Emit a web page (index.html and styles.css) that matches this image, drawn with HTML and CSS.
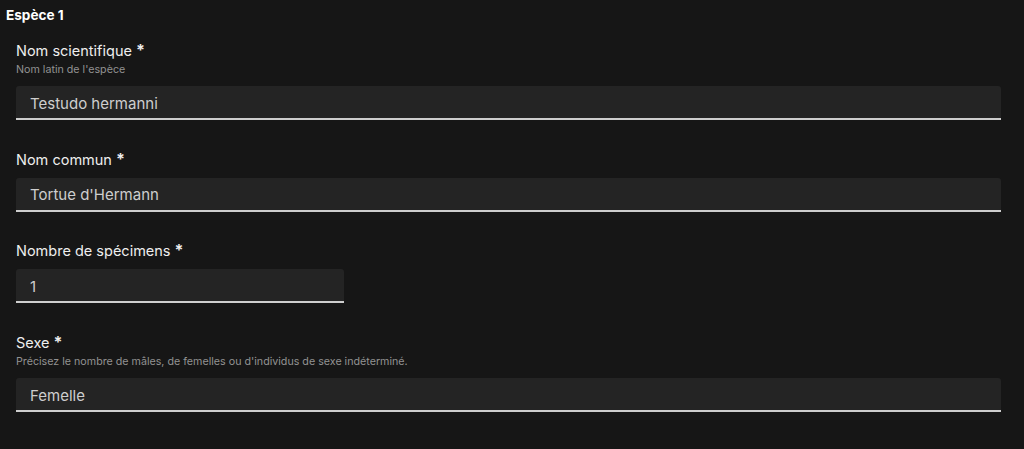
FILE: index.html
```html
<!DOCTYPE html>
<html lang="fr">
<head>
<meta charset="utf-8">
<title>Espèce 1</title>
<link rel="stylesheet" href="styles.css">
</head>
<body>
<section class="species">
  <h3 class="species-title">Espèce 1</h3>
  <div class="fields">
    <div class="group">
      <label class="label" for="sci">Nom scientifique <span class="req">*</span></label>
      <span class="hint">Nom latin de l'espèce</span>
      <input class="input" id="sci" type="text" value="Testudo hermanni">
    </div>
    <div class="group">
      <label class="label" for="common">Nom commun <span class="req">*</span></label>
      <input class="input" id="common" type="text" value="Tortue d'Hermann">
    </div>
    <div class="group">
      <label class="label" for="count">Nombre de spécimens <span class="req">*</span></label>
      <input class="input input-small" id="count" type="text" value="1">
    </div>
    <div class="group">
      <label class="label" for="sex">Sexe <span class="req">*</span></label>
      <span class="hint">Précisez le nombre de mâles, de femelles ou d'individus de sexe indéterminé.</span>
      <input class="input" id="sex" type="text" value="Femelle">
    </div>
  </div>
</section>
</body>
</html>
```
FILE: styles.css
```css
html, body {
  margin: 0;
  padding: 0;
  background: #161616;
}
body {
  font-family: Inter, "Noto Sans", sans-serif;
  color: #eeeeee;
}
.species {
  padding: 5px 23px 0 6px;
}
.species-title {
  margin: 0;
  font-weight: 700;
  font-size: 13.6px;
  line-height: 20px;
  color: #ffffff;
}
.fields {
  margin-top: 15px;
  padding-left: 10px;
  display: flex;
  flex-direction: column;
  gap: 28.7px;
}
.group {
  display: flex;
  flex-direction: column;
}
.label {
  font-size: 14.5px;
  line-height: 20px;
  color: #eeeeee;
}
.req {
  font-weight: 700;
  font-size: 16px;
}
.hint {
  margin-top: 1px;
  font-size: 10.7px;
  line-height: 16px;
  color: #929292;
}
.input {
  margin-top: 8px;
  height: 34px;
  box-sizing: border-box;
  border: 0;
  border-radius: 3px 3px 0 0;
  background: #242424;
  box-shadow: inset 0 -2px 0 0 #cecece;
  padding: 0 14px;
  font-family: Inter, "Noto Sans", sans-serif;
  font-size: 15px;
  color: #cecece;
  outline: none;
  width: 100%;
}
.input-small {
  width: 328px;
}
```
